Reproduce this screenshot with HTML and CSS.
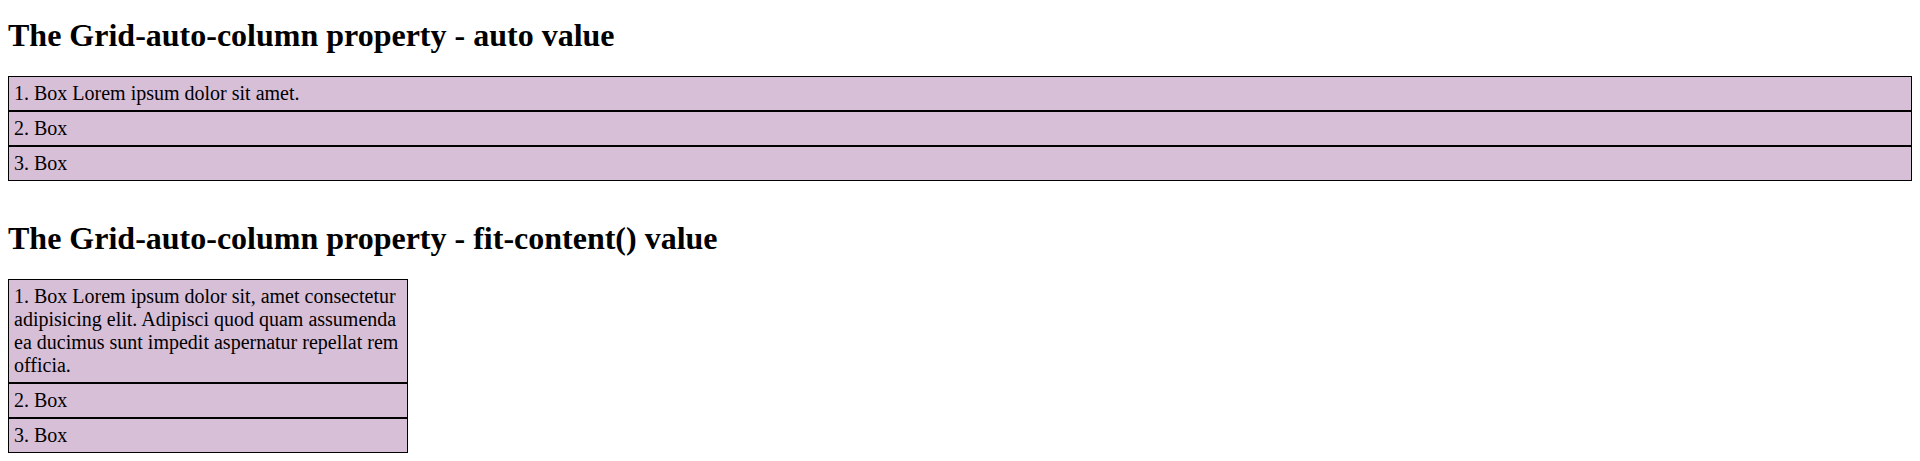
FILE: index.html
```html
<!DOCTYPE html>
<html lang="en">
<head>
<meta charset="utf-8">
<title>grid-auto-columns</title>
<link rel="stylesheet" href="styles.css">
</head>
<body>
  <main class="page">
    <section class="demo">
      <h2 class="demo-title">The Grid-auto-column property - auto value</h2>
      <div class="grid grid-auto">
        <div class="box">1. Box Lorem ipsum dolor sit amet.</div>
        <div class="box">2. Box</div>
        <div class="box">3. Box</div>
      </div>
    </section>
    <section class="demo">
      <h2 class="demo-title">The Grid-auto-column property - fit-content() value</h2>
      <div class="grid grid-fit">
        <div class="box">1. Box Lorem ipsum dolor sit, amet consectetur adipisicing elit. Adipisci quod quam assumenda ea ducimus sunt impedit aspernatur repellat rem officia.</div>
        <div class="box">2. Box</div>
        <div class="box">3. Box</div>
      </div>
    </section>
  </main>
</body>
</html>
```

FILE: styles.css
```css
html, body {
  margin: 0;
  background: #ffffff;
}

body {
  padding: 17px 8px;
  font-family: "Liberation Serif", "Times New Roman", serif;
  color: #000000;
}

.page {
  display: flex;
  flex-direction: column;
  gap: 39px;
}

.demo-title {
  margin: 0 0 22px;
  font-size: 32px;
  line-height: 37px;
  font-weight: bold;
}

.grid {
  display: grid;
  grid-auto-flow: row;
}

.grid-auto {
  grid-auto-columns: auto;
}

.grid-fit {
  grid-auto-columns: fit-content(400px);
}

.box {
  background: #d8bfd8;
  border: 1px solid #000000;
  padding: 5px 5px;
  font-size: 20px;
  line-height: 23px;
}
```
